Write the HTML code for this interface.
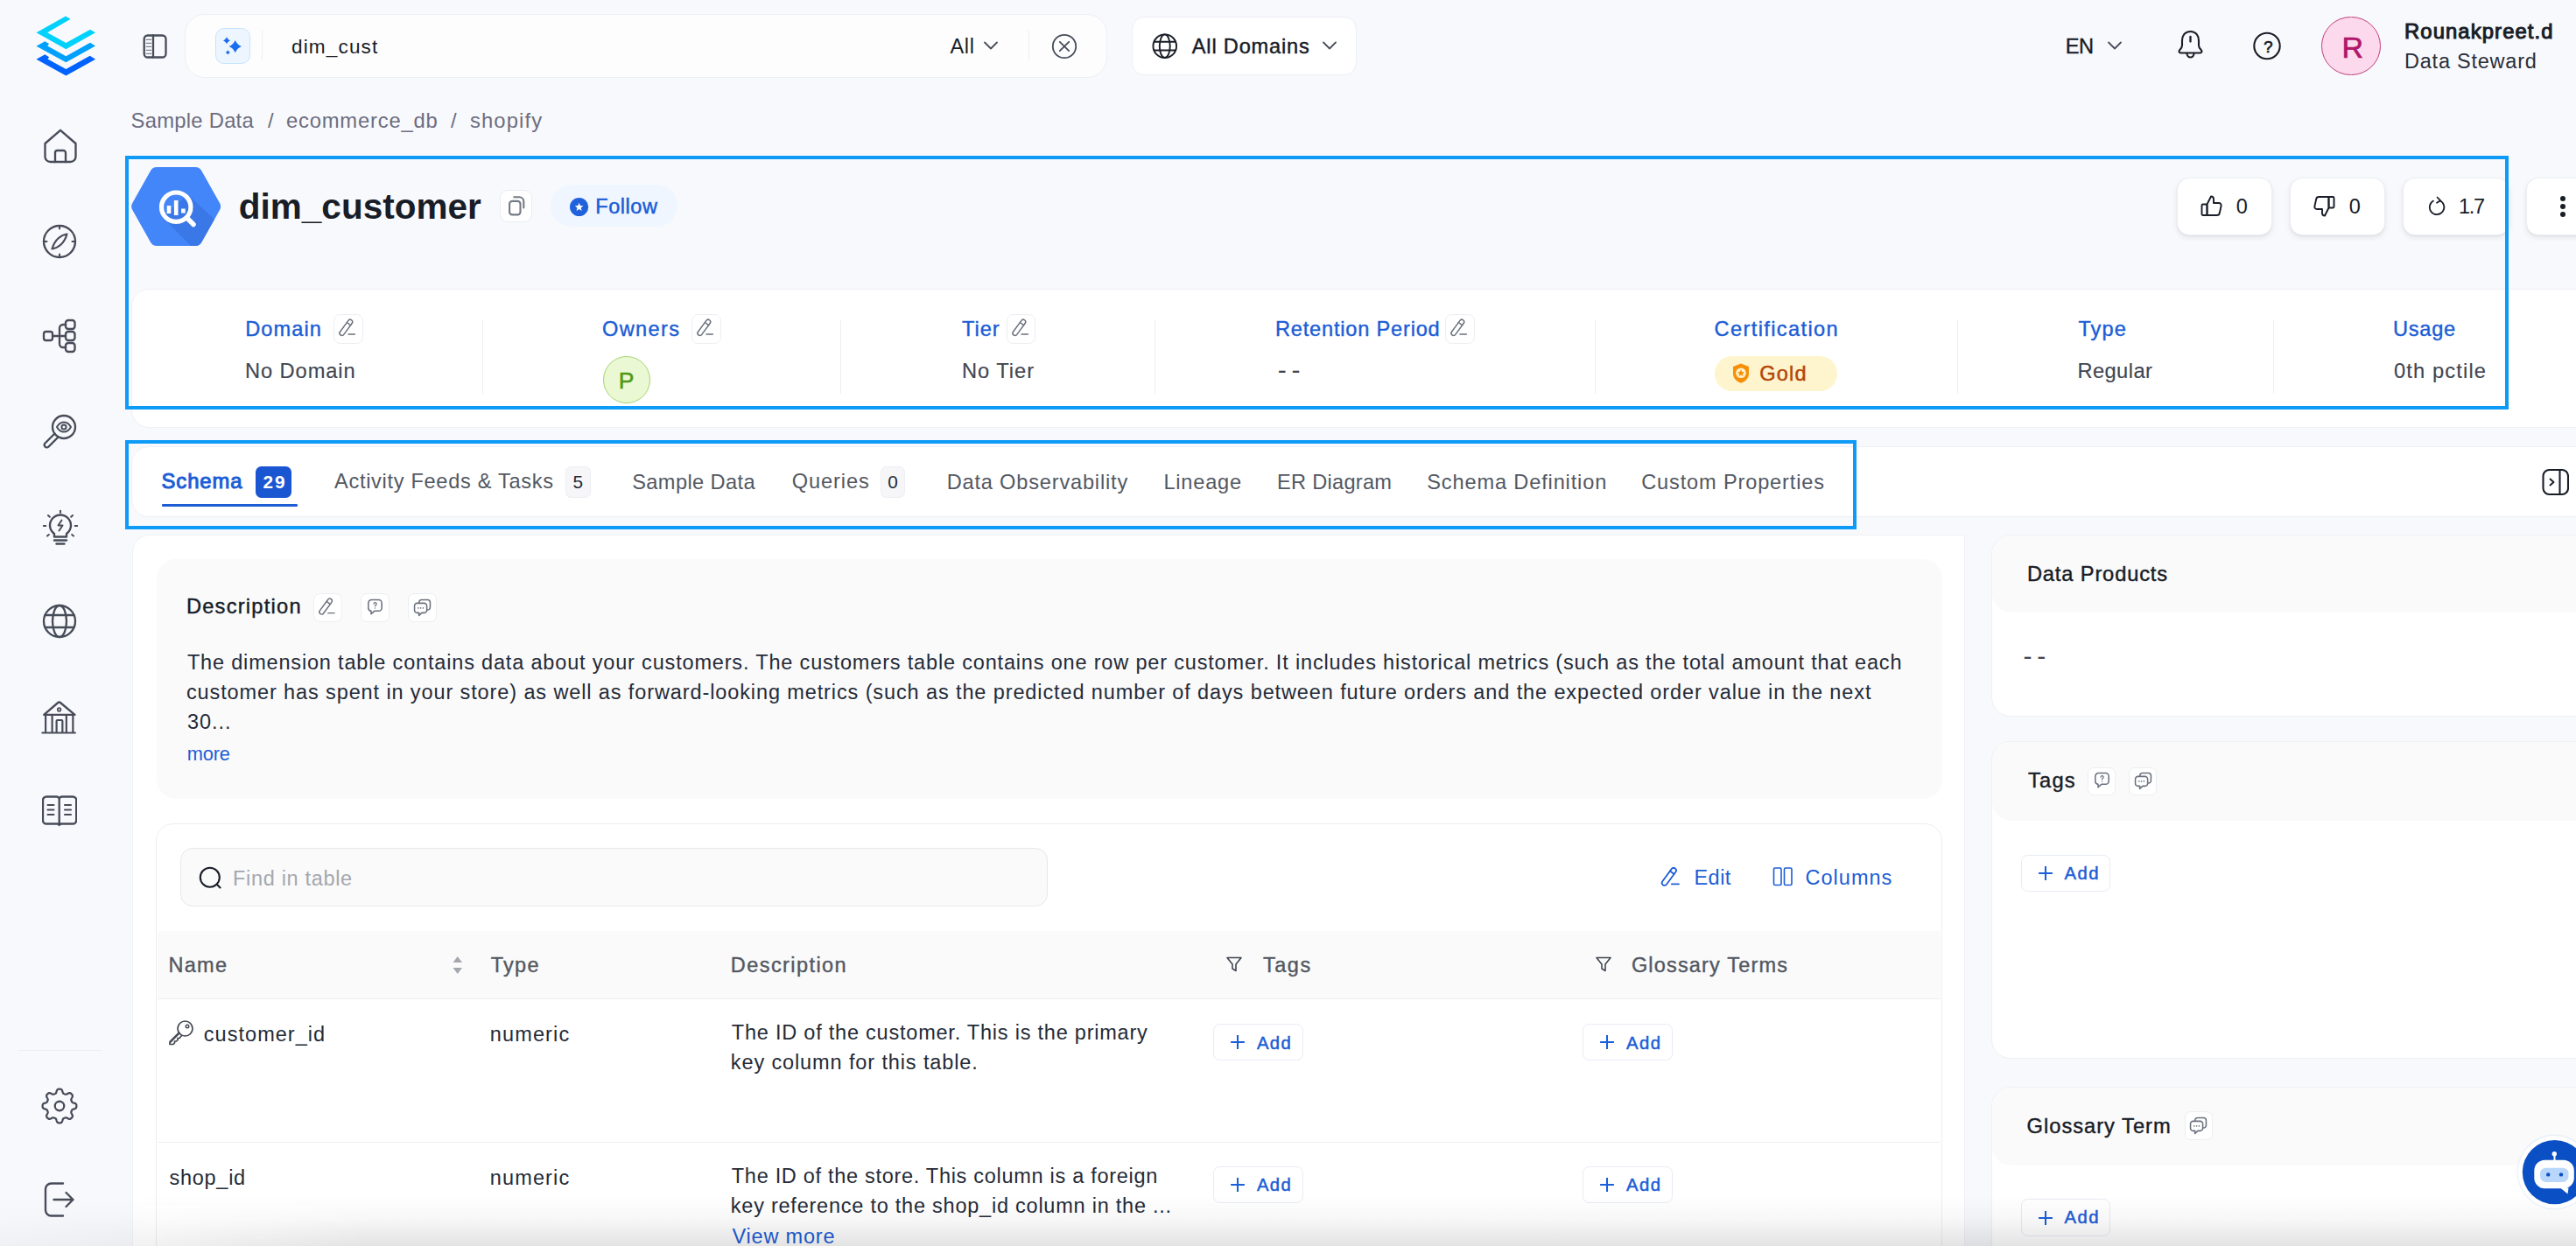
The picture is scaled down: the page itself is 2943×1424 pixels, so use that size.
<!DOCTYPE html>
<html lang="en"><head><meta charset="utf-8"><title>dim_customer - OpenMetadata</title>
<style>
html,body{margin:0;padding:0;background:#f8f9fc;width:2943px;height:1424px;overflow:hidden;}
#page{width:2943px;height:1424px;overflow:hidden;position:relative;background:#f8f9fc;font-family:"Liberation Sans", sans-serif;}
.b{position:absolute;box-sizing:border-box;display:block;}
.t{position:absolute;white-space:pre;line-height:1;font-family:"Liberation Sans", sans-serif;}
</style></head>
<body>
<div id="page">
<nav aria-label="Sidebar">
<svg class="b" style="left:40.00px;top:17.00px;" width="71.00" height="71.00" viewBox="40 17 71 71" fill="none">
<path d="M41.5 37.3 L75 18.6 L80.6 21.7 L54.1 37.3 L75.4 49 L103 33.7 L109 37.3 L75.4 56.2 Z" fill="#00d2fc"/>
<path d="M41.5 52.7 L51.3 47.2 L56 50 L54.3 52.4 L75.4 64.2 L103 48.7 L109 52.5 L75.4 71.3 Z" fill="#00a1fd"/>
<path d="M41.5 67.8 L51.3 62.2 L56.1 65.2 L54.5 67.5 L75.4 79.1 L102.7 63.8 L109.1 67.8 L75.4 86.5 Z" fill="#0062ff"/>
</svg>
<svg class="b" style="left:49.00px;top:147.00px;" width="40.00" height="40.00" viewBox="0 0 40 40" fill="none"><g stroke="#474c59" stroke-width="2.35" stroke-linecap="round" stroke-linejoin="round"><path d="M2.5 17 L20 1.8 L37.5 17 V32 a6 6 0 0 1 -6 6 H8.5 a6 6 0 0 1 -6 -6 Z"/><path d="M14 38 V27.5 a2.5 2.5 0 0 1 2.5 -2.5 h7 a2.5 2.5 0 0 1 2.5 2.5 V38"/></g></svg>
<svg class="b" style="left:48.30px;top:256.40px;" width="40.00" height="40.00" viewBox="0 0 40 40" fill="none"><g stroke="#474c59" stroke-width="2.35" stroke-linecap="round" stroke-linejoin="round"><circle cx="20" cy="20" r="18"/><path d="M20 2 v3.5 M20 34.5 v3.5 M2 20 h3.5 M34.5 20 h3.5" stroke-width="2"/><path d="M28.5 11.5 C22 12.5 14.5 17.5 11.5 28.5 C18 27.5 25.5 22.5 28.5 11.5 Z" stroke-width="2.2"/></g></svg>
<svg class="b" style="left:48.00px;top:364.30px;" width="40.00" height="40.00" viewBox="0 0 40 40" fill="none"><g stroke="#474c59" stroke-width="2.35" stroke-linecap="round" stroke-linejoin="round"><rect x="2" y="15" width="10" height="10" rx="2.5"/><rect x="27" y="2" width="10.5" height="10" rx="3"/><rect x="27" y="15" width="10.5" height="10" rx="3"/><rect x="27" y="28" width="10.5" height="10" rx="3"/><path d="M12 20 H27 M27 7 H24 a4 4 0 0 0 -4 4 V29 a4 4 0 0 0 4 4 H27"/></g></svg>
<svg class="b" style="left:48.00px;top:473.00px;" width="40.00" height="40.00" viewBox="0 0 40 40" fill="none"><g stroke="#474c59" stroke-width="2.35" stroke-linecap="round" stroke-linejoin="round"><circle cx="25" cy="15" r="13"/><path d="M17 15 c2.5 -4.5 5.5 -5.5 8 -5.5 s5.5 1 8 5.5 c-2.5 4.5 -5.5 5.5 -8 5.5 s-5.500 -1 -8 -5.5 Z" stroke-width="2"/><circle cx="25" cy="15" r="2.6" stroke-width="2"/><path d="M14.500 22.500 L3.500 33.500 a2.800 2.800 0 0 0 4 4 L18.500 26.500" stroke-width="2.4"/></g></svg>
<svg class="b" style="left:48.70px;top:582.50px;" width="40.00" height="40.00" viewBox="0 0 40 40" fill="none"><g stroke="#474c59" stroke-width="2.35" stroke-linecap="round" stroke-linejoin="round"><path d="M13 27 c-3 -2.300 -5 -5.500 -5 -9.500 a12 12 0 0 1 24 0 c0 4 -2 7.200 -5 9.500 v3.500 H13 Z" stroke-width="2.400"/><path d="M13 34.500 h14 M15.500 38.500 h9" stroke-width="2.400"/><path d="M21.500 11.500 l-4 6 h5 l-4 6" stroke-width="2"/><path d="M20 0.500 v2.500 M6 6 l1.800 1.800 M34 6 l-1.800 1.800 M0.800 18 h2.500 M36.700 18 h2.500 M5 29.500 l1.800 -1.500 M35 29.500 l-1.800 -1.500" stroke-width="2"/></g></svg>
<svg class="b" style="left:48.30px;top:690.00px;" width="40.00" height="40.00" viewBox="0 0 40 40" fill="none"><g stroke="#474c59" stroke-width="2.35" stroke-linecap="round" stroke-linejoin="round"><circle cx="20" cy="20" r="18"/><ellipse cx="20" cy="20" rx="8" ry="18"/><path d="M3.500 13 H36.500 M3.500 27 H36.500"/></g></svg>
<svg class="b" style="left:47.40px;top:799.50px;" width="40.00" height="40.00" viewBox="0 0 40 40" fill="none"><g stroke="#474c59" stroke-width="2.35" stroke-linecap="round" stroke-linejoin="round"><path d="M3.200 16.800 L19.300 3 a2 2 0 0 1 2.600 0 L38.500 16.800 Z"/><circle cx="20.600" cy="11" r="1.800" stroke-width="1.800"/><path d="M5.100 17.500 V36.500 M12.600 17.500 V36.500 M28.850 17.500 V36.500 M36.350 17.500 V36.500" stroke-width="2.200"/><path d="M17.600 36.500 V24 a1 1 0 0 1 1 -1 h4.750 a1 1 0 0 1 1 1 V36.500" stroke-width="2.200"/><path d="M1.350 37.500 H38.850" stroke-width="2.200"/></g></svg>
<svg class="b" style="left:48.30px;top:907.00px;" width="40.00" height="40.00" viewBox="0 0 40 40" fill="none"><g stroke="#474c59" stroke-width="2.35" stroke-linecap="round" stroke-linejoin="round"><path d="M19.700 6.500 V34.500 M19.700 6.500 a3 3 0 0 0 -3 -3 H5 a4 4 0 0 0 -4 4 V30.500 a4 4 0 0 0 4 4 H19.700 M19.700 6.500 a3 3 0 0 1 3 -3 H35.200 a4 4 0 0 1 4 4 V30.500 a4 4 0 0 1 -4 4 H19.700"/><circle cx="19.700" cy="35.300" r="1.400" fill="#474c59" stroke-width="1"/><path d="M6.500 13 H13.500 M6.500 18.500 H13.500 M6.500 24 H13.500 M26 13 H33 M26 18.500 H33 M26 24 H33" stroke-width="2.100"/></g></svg>
<div class="b" style="left:21.00px;top:1199.80px;width:94.50px;height:1.20px;background:#eceef3;"></div>
<svg class="b" style="left:46.80px;top:1243.00px;" width="42.00" height="42.00" viewBox="0 0 40 40" fill="none"><g stroke="#474c59" stroke-width="2.35" stroke-linecap="round" stroke-linejoin="round"><path d="M20.00 1.55 L20.72 1.58 L21.44 1.71 L22.13 2.01 L22.74 2.73 L23.18 4.01 L23.53 5.30 L23.93 6.06 L24.40 6.45 L24.90 6.71 L25.41 6.93 L25.93 7.13 L26.47 7.30 L27.08 7.36 L27.90 7.11 L29.06 6.45 L30.28 5.85 L31.21 5.78 L31.92 6.05 L32.51 6.47 L33.05 6.95 L33.53 7.49 L33.95 8.08 L34.22 8.79 L34.15 9.72 L33.55 10.94 L32.89 12.10 L32.64 12.92 L32.70 13.53 L32.87 14.07 L33.07 14.59 L33.29 15.10 L33.55 15.60 L33.94 16.07 L34.70 16.47 L35.99 16.82 L37.27 17.26 L37.99 17.87 L38.29 18.56 L38.42 19.28 L38.45 20.00 L38.42 20.72 L38.29 21.44 L37.99 22.13 L37.27 22.74 L35.99 23.18 L34.70 23.53 L33.94 23.93 L33.55 24.40 L33.29 24.90 L33.07 25.41 L32.87 25.93 L32.70 26.47 L32.64 27.08 L32.89 27.90 L33.55 29.06 L34.15 30.28 L34.22 31.21 L33.95 31.92 L33.53 32.51 L33.05 33.05 L32.51 33.53 L31.92 33.95 L31.21 34.22 L30.28 34.15 L29.06 33.55 L27.90 32.89 L27.08 32.64 L26.47 32.70 L25.93 32.87 L25.41 33.07 L24.90 33.29 L24.40 33.55 L23.93 33.94 L23.53 34.70 L23.18 35.99 L22.74 37.27 L22.13 37.99 L21.44 38.29 L20.72 38.42 L20.00 38.45 L19.28 38.42 L18.56 38.29 L17.87 37.99 L17.26 37.27 L16.82 35.99 L16.47 34.70 L16.07 33.94 L15.60 33.55 L15.10 33.29 L14.59 33.07 L14.07 32.87 L13.53 32.70 L12.92 32.64 L12.10 32.89 L10.94 33.55 L9.72 34.15 L8.79 34.22 L8.08 33.95 L7.49 33.53 L6.95 33.05 L6.47 32.51 L6.05 31.92 L5.78 31.21 L5.85 30.28 L6.45 29.06 L7.11 27.90 L7.36 27.08 L7.30 26.47 L7.13 25.93 L6.93 25.41 L6.71 24.90 L6.45 24.40 L6.06 23.93 L5.30 23.53 L4.01 23.18 L2.73 22.74 L2.01 22.13 L1.71 21.44 L1.58 20.72 L1.55 20.00 L1.58 19.28 L1.71 18.56 L2.01 17.87 L2.73 17.26 L4.01 16.82 L5.30 16.47 L6.06 16.07 L6.45 15.60 L6.71 15.10 L6.93 14.59 L7.13 14.07 L7.30 13.53 L7.36 12.92 L7.11 12.10 L6.45 10.94 L5.85 9.72 L5.78 8.79 L6.05 8.08 L6.47 7.49 L6.95 6.95 L7.49 6.47 L8.08 6.05 L8.79 5.78 L9.72 5.85 L10.94 6.45 L12.10 7.11 L12.92 7.36 L13.53 7.30 L14.07 7.13 L14.59 6.93 L15.10 6.71 L15.60 6.45 L16.07 6.06 L16.47 5.30 L16.82 4.01 L17.26 2.73 L17.87 2.01 L18.56 1.71 L19.28 1.58 Z" stroke-width="2.150"/><circle cx="20" cy="20" r="5" stroke-width="2.150"/></g></svg>
<svg class="b" style="left:48.00px;top:1351.00px;" width="40.00" height="40.00" viewBox="0 0 40 40" fill="none"><g stroke="#474c59" stroke-width="2.35" stroke-linecap="round" stroke-linejoin="round"><path d="M24 1.500 H10.500 a6.500 6.500 0 0 0 -6.500 6.500 V32 a6.500 6.500 0 0 0 6.500 6.500 H24"/><path d="M13.500 20 H35.500 M27.500 12 L35.500 20 L27.500 28"/></g></svg>
</nav>
<header>
<svg class="b" style="left:162.00px;top:37.50px;" width="30.00" height="30.00" viewBox="162 37.5 30 30" fill="none"><g stroke="#474c59" stroke-width="2.300" stroke-linecap="round" stroke-linejoin="round"><rect x="164.700" y="40" width="24.800" height="25" rx="4"/><path d="M175 40 V65"/><path d="M167.200 44.750 H172.800 M167.200 48.750 H172.800 M167.200 52.750 H172.800 M167.200 56.750 H172.800 M167.200 60.750 H172.800" stroke="#7d828d" stroke-width="1.250"/></g></svg>
<div class="b" style="left:211.00px;top:15.60px;width:1053.60px;height:73.40px;background:#fdfdfe;border:1.5px solid #edeff5;border-radius:23px;"></div>
<div class="b" style="left:246.00px;top:32.30px;width:39.60px;height:40.80px;background:#edf6ff;border:1.3px solid #c4e3fc;border-radius:10px;"></div>
<svg class="b" style="left:250.00px;top:38.00px;" width="32.00" height="30.00" viewBox="250 38 32 30" fill="none"><path d="M268.75 45.9 C270.0964 49.1832 272.6668 51.7536 275.95 53.1 C272.6668 54.446400000000004 270.0964 57.0168 268.75 60.300000000000004 C267.4036 57.0168 264.8332 54.446400000000004 261.55 53.1 C264.8332 51.7536 267.4036 49.1832 268.75 45.9 Z" fill="#1a6cf0"/><path d="M259 42.15 C259.7667 44.0196 261.2304 45.4833 263.1 46.25 C261.2304 47.0167 259.7667 48.4804 259 50.35 C258.2333 48.4804 256.7696 47.0167 254.9 46.25 C256.7696 45.4833 258.2333 44.0196 259 42.15 Z" fill="#1a6cf0"/><path d="M260.3 57.3 C260.80490000000003 58.5312 261.7688 59.4951 263.0 60 C261.7688 60.5049 260.80490000000003 61.4688 260.3 62.7 C259.7951 61.4688 258.8312 60.5049 257.6 60 C258.8312 59.4951 259.7951 58.5312 260.3 57.3 Z" fill="#1a6cf0"/></svg>
<div class="b" style="left:299.20px;top:35.00px;width:1.20px;height:34.00px;background:#eceef2;"></div>
<span class="t" id="t0" style="left:333.00px;top:42.72px;font-size:22.60px;color:#181d27;letter-spacing:1.124px;">dim_cust</span>
<span class="t" id="t1" style="left:1085.40px;top:42.31px;font-size:23.50px;color:#181d27;letter-spacing:0.752px;">All</span>
<svg class="b" style="left:1123.00px;top:46.00px;" width="18.00" height="12.00" viewBox="0 0 18 12" fill="none"><path d="M2 2.500 L9 9.500 L16 2.500" stroke="#474c59" stroke-width="1.800" stroke-linecap="round" stroke-linejoin="round"/></svg>
<div class="b" style="left:1175.00px;top:35.00px;width:1.20px;height:34.00px;background:#eceef2;"></div>
<svg class="b" style="left:1201.00px;top:38.00px;" width="30.00" height="30.00" viewBox="0 0 30 30" fill="none"><g stroke="#474c59" stroke-width="1.800" stroke-linecap="round"><circle cx="15" cy="15" r="13.200"/><path d="M9.800 9.800 L20.200 20.200 M20.200 9.800 L9.800 20.200"/></g></svg>
<div class="b" style="left:1293.30px;top:19.20px;width:256.30px;height:66.90px;background:#ffffff;border:1.2px solid #eceff6;border-radius:14px;"></div>
<svg class="b" style="left:1315.00px;top:37.00px;" width="32.00" height="32.00" viewBox="1315 37 32 32" fill="none"><g stroke="#181d27" stroke-width="1.900"><circle cx="1330.750" cy="52.700" r="13.300"/><ellipse cx="1330.750" cy="52.700" rx="6" ry="13.300"/><path d="M1318.300 47.700 H1343.200 M1318.300 57.500 H1343.200"/></g></svg>
<span class="t" id="t2" style="left:1361.80px;top:42.31px;font-size:23.60px;color:#181d27;letter-spacing:0.813px;-webkit-text-stroke:0.45px #181d27;">All Domains</span>
<svg class="b" style="left:1510.00px;top:46.00px;" width="18.00" height="12.00" viewBox="0 0 18 12" fill="none"><path d="M2 2.500 L9 9.500 L16 2.500" stroke="#474c59" stroke-width="1.800" stroke-linecap="round" stroke-linejoin="round"/></svg>
<span class="t" id="t3" style="left:2359.80px;top:42.31px;font-size:23.60px;color:#181d27;letter-spacing:-0.537px;-webkit-text-stroke:0.4px #181d27;">EN</span>
<svg class="b" style="left:2407.00px;top:46.00px;" width="18.00" height="12.00" viewBox="0 0 18 12" fill="none"><path d="M2 2.500 L9 9.500 L16 2.500" stroke="#474c59" stroke-width="1.800" stroke-linecap="round" stroke-linejoin="round"/></svg>
<svg class="b" style="left:2487.00px;top:34.00px;" width="31.00" height="34.00" viewBox="0 0 31 34" fill="none"><g stroke="#181d27" stroke-width="2.100" stroke-linecap="round" stroke-linejoin="round"><path d="M15.500 2 C9 2 6 7 6 12.500 V18 C6 20.500 4.500 22 3 23.500 C2 24.500 2.500 26.500 4.500 26.500 H26.500 C28.500 26.500 29 24.500 28 23.500 C26.500 22 25 20.500 25 18 V12.500 C25 7 22 2 15.500 2 Z"/><path d="M11.500 27 a4 4.500 0 0 0 8 0"/><path d="M15.500 8 V13.500" stroke-width="2.300"/></g></svg>
<svg class="b" style="left:2573.00px;top:36.00px;" width="34.00" height="33.00" viewBox="0 0 34 33" fill="none"><circle cx="17" cy="16.500" r="14.700" stroke="#181d27" stroke-width="2.100"/></svg>
<span class="t" id="t4" style="left:2586.30px;top:44.60px;font-size:18.50px;color:#181d27;-webkit-text-stroke:0.7px #181d27;">?</span>
<div class="b" style="left:2651.80px;top:18.50px;width:67.80px;height:67.80px;background:#fcd9ec;border:1.2px solid #c2407e;border-radius:50%;"></div>
<span class="t" id="t5" style="left:2675.40px;top:36.62px;font-size:34.00px;color:#b0176a;-webkit-text-stroke:0.7px #b0176a;">R</span>
<span class="t" id="t6" style="left:2747.00px;top:24.40px;font-size:23.80px;color:#181d27;letter-spacing:1.119px;-webkit-text-stroke:1.05px #181d27;">Rounakpreet.d</span>
<span class="t" id="t7" style="left:2747.00px;top:59.31px;font-size:23.50px;color:#2a2f3a;letter-spacing:0.772px;">Data Steward</span>
</header>
<nav aria-label="Breadcrumb">
<span class="t" id="t8" style="left:149.60px;top:125.90px;font-size:23.80px;color:#6c6d80;letter-spacing:0.257px;">Sample Data</span>
<span class="t" id="t9" style="left:306.00px;top:125.90px;font-size:23.80px;color:#6c6d80;">/</span>
<span class="t" id="t10" style="left:327.00px;top:125.90px;font-size:23.80px;color:#6c6d80;letter-spacing:0.793px;">ecommerce_db</span>
<span class="t" id="t11" style="left:515.00px;top:125.90px;font-size:23.80px;color:#6c6d80;">/</span>
<span class="t" id="t12" style="left:537.00px;top:125.90px;font-size:23.80px;color:#6c6d80;letter-spacing:1.117px;">shopify</span>
</nav>
<section aria-label="Entity header">
<svg class="b" style="left:149.50px;top:190.50px;" width="102.30" height="90.00" viewBox="0 0 102.3 90" fill="none">
<defs><clipPath id="hx"><path d="M29 0 H73.300 a8 8 0 0 1 6.900 4 L101 41 a8 8 0 0 1 0 8 L80.200 86 a8 8 0 0 1 -6.900 4 H29 a8 8 0 0 1 -6.900 -4 L1.300 49 a8 8 0 0 1 0 -8 L22.100 4 a8 8 0 0 1 6.900 -4 Z"/></clipPath></defs>
<g clip-path="url(#hx)"><rect width="102.300" height="90" fill="#4386fa"/>
<path d="M36 58 L64 31 L102 66 V90 H68 Z" fill="#3b78e7"/></g>
<circle cx="51.200" cy="45.700" r="16.700" stroke="#fff" stroke-width="5.200"/>
<path d="M63.500 58 L71 65.500" stroke="#fff" stroke-width="5.500" stroke-linecap="round"/>
<path d="M43 44 V53 M51.200 38 V55 M59.400 47.500 V52.500" stroke="#fff" stroke-width="4.600"/>
</svg>
<span class="t" id="t13" style="left:272.75px;top:215.81px;font-size:40.50px;color:#181d27;font-weight:700;letter-spacing:0.016px;">dim_customer</span>
<div class="b" style="left:571.25px;top:216.90px;width:36.25px;height:36.90px;background:#ffffff;border:1px solid #eaecf2;border-radius:9px;"></div>
<svg class="b" style="left:578.00px;top:222.00px;" width="24.00" height="27.00" viewBox="578 222 24 27" fill="none"><rect x="582.100" y="229.900" width="12.400" height="15.500" rx="3.200" stroke="#747a86" stroke-width="2.100"/><path d="M587.200 225.300 H593.300 a5 5 0 0 1 5 5 V237.500" stroke="#747a86" stroke-width="2.100" stroke-linecap="round"/></svg>
<div class="b" style="left:629.40px;top:211.25px;width:144.40px;height:48.10px;background:#eff6ff;border-radius:24.1px;"></div>
<svg class="b" style="left:651.25px;top:225.60px;" width="21.25" height="21.25" viewBox="0 0 21.25 21.25" fill="none"><circle cx="10.600" cy="10.600" r="10.600" fill="#1f62dc"/><path d="M10.600 5.800 L11.900 9.100 L15.400 9.300 L12.700 11.500 L13.600 14.900 L10.600 13 L7.600 14.900 L8.500 11.500 L5.800 9.300 L9.300 9.100 Z" fill="#fff"/></svg>
<span class="t" id="t14" style="left:680.25px;top:225.40px;font-size:23.50px;color:#1c5dd6;letter-spacing:0.563px;-webkit-text-stroke:0.5px #1c5dd6;">Follow</span>
<div class="b" style="left:2486.90px;top:202.50px;width:109.40px;height:66.90px;background:#ffffff;border:1px solid #eceef3;border-radius:14px;box-shadow:0 1px 2px rgba(16,24,40,0.05),0 3px 6px rgba(16,24,40,0.08);"></div>
<div class="b" style="left:2615.60px;top:202.50px;width:109.40px;height:66.90px;background:#ffffff;border:1px solid #eceef3;border-radius:14px;box-shadow:0 1px 2px rgba(16,24,40,0.05),0 3px 6px rgba(16,24,40,0.08);"></div>
<div class="b" style="left:2744.75px;top:202.50px;width:122.50px;height:66.90px;background:#ffffff;border:1px solid #eceef3;border-radius:14px;box-shadow:0 1px 2px rgba(16,24,40,0.05),0 3px 6px rgba(16,24,40,0.08);"></div>
<div class="b" style="left:2886.00px;top:202.50px;width:80.00px;height:66.90px;background:#ffffff;border:1px solid #eceef3;border-radius:14px;box-shadow:0 1px 2px rgba(16,24,40,0.05),0 3px 6px rgba(16,24,40,0.08);"></div>
<svg class="b" style="left:2513.00px;top:222.00px;" width="27.00" height="27.00" viewBox="0 0 27 27" fill="none"><g stroke="#181d27" stroke-width="1.900" stroke-linejoin="round" stroke-linecap="round"><path d="M8.500 11.500 L13 2.500 C14.800 2.500 16 3.700 16 5.500 V10 H22 C23.800 10 25 11.600 24.600 13.300 L22.800 21.500 C22.500 23 21.300 24 19.800 24 H8.500 Z"/><rect x="2.500" y="11.500" width="6" height="12.500" rx="1.200"/></g></svg>
<span class="t" id="t15" style="left:2554.70px;top:225.40px;font-size:23.50px;color:#181d27;">0</span>
<svg class="b" style="left:2642.00px;top:222.00px;" width="27.00" height="27.00" viewBox="0 0 27 27" fill="none"><g transform="rotate(180 13.5 13.5)" stroke="#181d27" stroke-width="1.900" stroke-linejoin="round" stroke-linecap="round"><path d="M8.500 11.500 L13 2.500 C14.800 2.500 16 3.700 16 5.500 V10 H22 C23.800 10 25 11.600 24.600 13.300 L22.800 21.500 C22.500 23 21.300 24 19.800 24 H8.500 Z"/><rect x="2.500" y="11.500" width="6" height="12.500" rx="1.200"/></g></svg>
<span class="t" id="t16" style="left:2683.70px;top:225.40px;font-size:23.50px;color:#181d27;">0</span>
<svg class="b" style="left:2773.00px;top:224.00px;" width="22.00" height="23.00" viewBox="0 0 22 23" fill="none"><g stroke="#181d27" stroke-width="1.700" stroke-linecap="round" stroke-linejoin="round"><path d="M14.500 5.300 A8.300 8.300 0 1 1 7 5.600"/><path d="M11.500 1.500 L15 5.200 L11 7.800" /></g></svg>
<span class="t" id="t17" style="left:2809.00px;top:225.40px;font-size:23.50px;color:#181d27;letter-spacing:-1.299px;">1.7</span>
<div class="b" style="left:2924.60px;top:223.80px;width:6.40px;height:6.40px;background:#181d27;border-radius:50%;"></div>
<div class="b" style="left:2924.60px;top:232.80px;width:6.40px;height:6.40px;background:#181d27;border-radius:50%;"></div>
<div class="b" style="left:2924.60px;top:241.80px;width:6.40px;height:6.40px;background:#181d27;border-radius:50%;"></div>
<div class="b" style="left:150.00px;top:330.20px;width:2900.00px;height:158.40px;background:#ffffff;border:1px solid #eff0f4;border-radius:20px;"></div>
<span class="t" id="t18" style="left:280.25px;top:365.00px;font-size:23.60px;color:#1c5dd6;letter-spacing:1.064px;-webkit-text-stroke:0.4px #1c5dd6;">Domain</span>
<div class="b" style="left:381.20px;top:359.00px;width:33.50px;height:33.50px;background:#ffffff;border:1px solid #eceef2;border-radius:7.5px;"></div>
<svg class="b" style="left:381.20px;top:359.00px;" width="33.50" height="33.50" viewBox="0 0 33.1 33.1" fill="none"><g stroke="#6a707d" stroke-width="1.45" stroke-linecap="round" stroke-linejoin="round"><path d="M7.400 19.960 L16.700 7.260 A2.600 2.600 0 0 1 20.900 10.340 L11.600 23.040 A2.600 2.600 0 0 1 7.400 19.960 Z"/><path d="M15.160 9.360 L19.360 12.440"/><path d="M16.800 22.700 H24.100"/></g></svg>
<span class="t" id="t19" style="left:280.00px;top:413.26px;font-size:23.70px;color:#414651;letter-spacing:0.899px;-webkit-text-stroke:0.15px #414651;">No Domain</span>
<div class="b" style="left:550.70px;top:365.70px;width:1.20px;height:84.60px;background:#eceef2;"></div>
<span class="t" id="t20" style="left:688.00px;top:365.00px;font-size:23.60px;color:#1c5dd6;letter-spacing:1.342px;-webkit-text-stroke:0.4px #1c5dd6;">Owners</span>
<div class="b" style="left:790.00px;top:359.00px;width:33.50px;height:33.50px;background:#ffffff;border:1px solid #eceef2;border-radius:7.5px;"></div>
<svg class="b" style="left:790.00px;top:359.00px;" width="33.50" height="33.50" viewBox="0 0 33.1 33.1" fill="none"><g stroke="#6a707d" stroke-width="1.45" stroke-linecap="round" stroke-linejoin="round"><path d="M7.400 19.960 L16.700 7.260 A2.600 2.600 0 0 1 20.900 10.340 L11.600 23.040 A2.600 2.600 0 0 1 7.400 19.960 Z"/><path d="M15.160 9.360 L19.360 12.440"/><path d="M16.800 22.700 H24.100"/></g></svg>
<div class="b" style="left:688.80px;top:406.70px;width:53.90px;height:53.90px;background:#eaf8d4;border:1.2px solid #a5d56f;border-radius:50%;"></div>
<span class="t" id="t21" style="left:706.80px;top:422.41px;font-size:26.50px;color:#4f9a12;-webkit-text-stroke:0.5px #4f9a12;">P</span>
<div class="b" style="left:960.10px;top:365.70px;width:1.20px;height:84.60px;background:#eceef2;"></div>
<span class="t" id="t22" style="left:1099.00px;top:365.00px;font-size:23.60px;color:#1c5dd6;letter-spacing:0.933px;-webkit-text-stroke:0.4px #1c5dd6;">Tier</span>
<div class="b" style="left:1149.80px;top:359.00px;width:33.50px;height:33.50px;background:#ffffff;border:1px solid #eceef2;border-radius:7.5px;"></div>
<svg class="b" style="left:1149.80px;top:359.00px;" width="33.50" height="33.50" viewBox="0 0 33.1 33.1" fill="none"><g stroke="#6a707d" stroke-width="1.45" stroke-linecap="round" stroke-linejoin="round"><path d="M7.400 19.960 L16.700 7.260 A2.600 2.600 0 0 1 20.900 10.340 L11.600 23.040 A2.600 2.600 0 0 1 7.400 19.960 Z"/><path d="M15.160 9.360 L19.360 12.440"/><path d="M16.800 22.700 H24.100"/></g></svg>
<span class="t" id="t23" style="left:1099.00px;top:413.26px;font-size:23.70px;color:#414651;letter-spacing:0.952px;-webkit-text-stroke:0.15px #414651;">No Tier</span>
<div class="b" style="left:1318.60px;top:365.70px;width:1.20px;height:84.60px;background:#eceef2;"></div>
<span class="t" id="t24" style="left:1457.00px;top:365.00px;font-size:23.60px;color:#1c5dd6;letter-spacing:0.798px;-webkit-text-stroke:0.4px #1c5dd6;">Retention Period</span>
<div class="b" style="left:1651.40px;top:359.00px;width:33.50px;height:33.50px;background:#ffffff;border:1px solid #eceef2;border-radius:7.5px;"></div>
<svg class="b" style="left:1651.40px;top:359.00px;" width="33.50" height="33.50" viewBox="0 0 33.1 33.1" fill="none"><g stroke="#6a707d" stroke-width="1.45" stroke-linecap="round" stroke-linejoin="round"><path d="M7.400 19.960 L16.700 7.260 A2.600 2.600 0 0 1 20.900 10.340 L11.600 23.040 A2.600 2.600 0 0 1 7.400 19.960 Z"/><path d="M15.160 9.360 L19.360 12.440"/><path d="M16.800 22.700 H24.100"/></g></svg>
<span class="t" id="t25" style="left:1459.70px;top:408.20px;font-size:30.00px;color:#414651;letter-spacing:-1.313px;">- -</span>
<div class="b" style="left:1821.70px;top:365.70px;width:1.20px;height:84.60px;background:#eceef2;"></div>
<span class="t" id="t26" style="left:1958.60px;top:365.00px;font-size:23.60px;color:#1c5dd6;letter-spacing:1.379px;-webkit-text-stroke:0.4px #1c5dd6;">Certification</span>
<div class="b" style="left:1958.75px;top:406.90px;width:140.25px;height:40.00px;background:#fef4cd;border-radius:20px;"></div>
<svg class="b" style="left:1977.00px;top:414.00px;" width="24.00" height="25.00" viewBox="0 0 24 25" fill="none"><path d="M12 1.500 L21 5 V13 C21 18.500 17 22 12 23.800 C7 22 3 18.500 3 13 V5 Z" fill="#f79009"/><circle cx="12" cy="12.300" r="5.800" fill="#fff4d1"/><path d="M12 8.300 L13.200 11 L16 11.300 L13.900 13.200 L14.500 16 L12 14.500 L9.500 16 L10.100 13.200 L8 11.300 L10.800 11 Z" fill="#f79009"/></svg>
<span class="t" id="t27" style="left:2010.25px;top:416.25px;font-size:23.60px;color:#b54708;letter-spacing:1.145px;-webkit-text-stroke:0.5px #b54708;">Gold</span>
<div class="b" style="left:2236.00px;top:365.70px;width:1.20px;height:84.60px;background:#eceef2;"></div>
<span class="t" id="t28" style="left:2374.40px;top:365.00px;font-size:23.60px;color:#1c5dd6;letter-spacing:1.091px;-webkit-text-stroke:0.4px #1c5dd6;">Type</span>
<span class="t" id="t29" style="left:2373.40px;top:413.26px;font-size:23.70px;color:#414651;letter-spacing:0.423px;-webkit-text-stroke:0.15px #414651;">Regular</span>
<div class="b" style="left:2597.00px;top:365.70px;width:1.20px;height:84.60px;background:#eceef2;"></div>
<span class="t" id="t30" style="left:2734.00px;top:365.00px;font-size:23.60px;color:#1c5dd6;letter-spacing:0.730px;-webkit-text-stroke:0.4px #1c5dd6;">Usage</span>
<span class="t" id="t31" style="left:2735.00px;top:413.26px;font-size:23.70px;color:#414651;letter-spacing:1.130px;-webkit-text-stroke:0.15px #414651;">0th pctile</span>
</section>
<nav aria-label="Tabs">
<div class="b" style="left:150.00px;top:509.50px;width:2900.00px;height:81.00px;background:#ffffff;border:1px solid #eff0f4;border-radius:20px;"></div>
<span class="t" id="t32" style="left:184.60px;top:538.11px;font-size:23.80px;color:#1c5dd6;letter-spacing:0.907px;-webkit-text-stroke:1.0px #1c5dd6;">Schema</span>
<div class="b" style="left:292.00px;top:533.00px;width:41.00px;height:35.70px;background:#1a56d2;border-radius:6.5px;"></div>
<span class="t" id="t33" style="left:300.50px;top:541.10px;font-size:20.80px;color:#ffffff;font-weight:700;letter-spacing:1.934px;">29</span>
<div class="b" style="left:184.80px;top:575.50px;width:155.70px;height:3.40px;background:#1c5dd6;border-radius:1px;"></div>
<span class="t" id="t34" style="left:382.00px;top:539.11px;font-size:23.60px;color:#535862;letter-spacing:0.685px;">Activity Feeds &amp; Tasks</span>
<div class="b" style="left:646.40px;top:533.00px;width:28.30px;height:35.70px;background:#f6f6f8;border:1px solid #eceef2;border-radius:6.5px;"></div>
<span class="t" id="t35" style="left:654.50px;top:541.10px;font-size:20.80px;color:#252b37;">5</span>
<span class="t" id="t36" style="left:722.20px;top:539.91px;font-size:23.60px;color:#535862;letter-spacing:0.393px;">Sample Data</span>
<span class="t" id="t37" style="left:904.70px;top:539.11px;font-size:23.60px;color:#535862;letter-spacing:0.914px;">Queries</span>
<div class="b" style="left:1005.80px;top:533.00px;width:28.70px;height:35.70px;background:#f6f6f8;border:1px solid #eceef2;border-radius:6.5px;"></div>
<span class="t" id="t38" style="left:1014.30px;top:541.10px;font-size:20.80px;color:#252b37;">0</span>
<span class="t" id="t39" style="left:1081.70px;top:539.91px;font-size:23.60px;color:#535862;letter-spacing:0.808px;">Data Observability</span>
<span class="t" id="t40" style="left:1329.40px;top:539.91px;font-size:23.60px;color:#535862;letter-spacing:0.792px;">Lineage</span>
<span class="t" id="t41" style="left:1459.00px;top:539.91px;font-size:23.60px;color:#535862;letter-spacing:0.274px;">ER Diagram</span>
<span class="t" id="t42" style="left:1630.20px;top:539.91px;font-size:23.60px;color:#535862;letter-spacing:0.853px;">Schema Definition</span>
<span class="t" id="t43" style="left:1875.20px;top:539.91px;font-size:23.60px;color:#535862;letter-spacing:0.839px;">Custom Properties</span>
<svg class="b" style="left:2903.50px;top:535.30px;" width="31.50" height="32.00" viewBox="0 0 31.5 32" fill="none"><g stroke="#181d27" stroke-width="2.100" stroke-linecap="round" stroke-linejoin="round"><rect x="1.500" y="2" width="28.500" height="28" rx="7"/><path d="M20.500 2 V30"/><path d="M9.500 12.500 L13.500 16 L9.500 19.500" stroke-width="1.900"/></g></svg>
</nav>
<main>
<section aria-label="Description">
<div class="b" style="left:150.60px;top:611.40px;width:2094.80px;height:900.00px;background:#ffffff;border:1px solid #f0f1f5;border-radius:20px 0 0 0;"></div>
<div class="b" style="left:178.60px;top:638.60px;width:2040.20px;height:274.00px;background:#fafafb;border-radius:22px;"></div>
<span class="t" id="t44" style="left:212.90px;top:681.91px;font-size:23.70px;color:#181d27;letter-spacing:1.219px;-webkit-text-stroke:0.42px #181d27;">Description</span>
<div class="b" style="left:357.90px;top:678.20px;width:33.00px;height:33.00px;background:#ffffff;border:1px solid #eceef2;border-radius:7.5px;"></div>
<svg class="b" style="left:357.90px;top:678.20px;" width="33.00" height="33.00" viewBox="0 0 33.1 33.1" fill="none"><g stroke="#6a707d" stroke-width="1.45" stroke-linecap="round" stroke-linejoin="round"><path d="M7.400 19.960 L16.700 7.260 A2.600 2.600 0 0 1 20.900 10.340 L11.600 23.040 A2.600 2.600 0 0 1 7.400 19.960 Z"/><path d="M15.160 9.360 L19.360 12.440"/><path d="M16.800 22.700 H24.100"/></g></svg>
<div class="b" style="left:412.30px;top:678.20px;width:33.00px;height:33.00px;background:#ffffff;border:1px solid #eceef2;border-radius:7px;"></div>
<svg class="b" style="left:417.30px;top:683.20px;" width="23.00" height="23.00" viewBox="0 0 18 18" fill="none"><path d="M3 4.800 a2.800 2.800 0 0 1 2.800 -2.800 h6.400 a2.800 2.800 0 0 1 2.800 2.800 v4.400 a2.800 2.800 0 0 1 -2.800 2.800 H8.500 L5.500 14.600 V12 a2.800 2.800 0 0 1 -2.500 -2.800 Z" stroke="#6a707d" stroke-width="1.200" stroke-linejoin="round"/><path d="M7.900 5.600 a1.200 1.200 0 1 1 1.700 1.100 c-0.400 0.200 -0.600 0.500 -0.600 0.900 M9 9.300 v0.100" stroke="#6a707d" stroke-width="1" stroke-linecap="round"/></svg>
<div class="b" style="left:466.20px;top:678.20px;width:33.00px;height:33.00px;background:#ffffff;border:1px solid #eceef2;border-radius:7px;"></div>
<svg class="b" style="left:471.20px;top:683.20px;" width="23.00" height="23.00" viewBox="0 0 18 18" fill="none"><path d="M6 4.500 V4.300 a2.300 2.300 0 0 1 2.300 -2.300 h5.400 a2.300 2.300 0 0 1 2.300 2.300 v4.400 a2.300 2.300 0 0 1 -2.300 2.300 h-0.200" stroke="#6a707d" stroke-width="1.200" stroke-linecap="round"/><path d="M2 7.300 a2.300 2.300 0 0 1 2.300 -2.300 h6.400 a2.300 2.300 0 0 1 2.300 2.300 v4 a2.300 2.300 0 0 1 -2.300 2.300 H8.500 L6 16 V13.600 H4.300 a2.300 2.300 0 0 1 -2.300 -2.300 Z" stroke="#6a707d" stroke-width="1.200" stroke-linejoin="round"/><path d="M5.300 9.300 v0.100 M7.500 9.300 v0.100 M9.700 9.300 v0.100" stroke="#6a707d" stroke-width="1.300" stroke-linecap="round"/></svg>
<span class="t" id="t45" style="left:213.90px;top:745.81px;font-size:23.50px;color:#252b37;letter-spacing:0.826px;">The dimension table contains data about your customers. The customers table contains one row per customer. It includes historical metrics (such as the total amount that each</span>
<span class="t" id="t46" style="left:212.90px;top:779.62px;font-size:23.50px;color:#252b37;letter-spacing:0.889px;">customer has spent in your store) as well as forward-looking metrics (such as the predicted number of days between future orders and the expected order value in the next</span>
<span class="t" id="t47" style="left:213.90px;top:813.62px;font-size:23.50px;color:#252b37;letter-spacing:0.976px;">30...</span>
<span class="t" id="t48" style="left:213.75px;top:850.51px;font-size:21.80px;color:#1c5dd6;letter-spacing:-0.163px;">more</span>
</section>
<section aria-label="Schema table">
<div class="b" style="left:178.40px;top:941.00px;width:2040.60px;height:600.00px;background:#ffffff;border:1px solid #eceef2;border-radius:20px 20px 0 0;"></div>
<div class="b" style="left:206.30px;top:968.50px;width:991.10px;height:67.20px;background:#fafafa;border:1px solid #e6e8ec;border-radius:14px;"></div>
<svg class="b" style="left:226.50px;top:989.50px;" width="27.00" height="27.00" viewBox="0 0 27 27" fill="none"><circle cx="12.800" cy="12.800" r="11" stroke="#181d27" stroke-width="2.100"/><path d="M21 21 L24.500 24.500" stroke="#181d27" stroke-width="2.100" stroke-linecap="round"/></svg>
<span class="t" id="t49" style="left:266.00px;top:992.51px;font-size:23.50px;color:#a4a7ae;letter-spacing:0.679px;">Find in table</span>
<svg class="b" style="left:1891.30px;top:985.10px;" width="37.07" height="37.07" viewBox="0 0 33.1 33.1" fill="none"><g stroke="#1c5dd6" stroke-width="1.55" stroke-linecap="round" stroke-linejoin="round"><path d="M7.400 19.960 L16.700 7.260 A2.600 2.600 0 0 1 20.900 10.340 L11.600 23.040 A2.600 2.600 0 0 1 7.400 19.960 Z"/><path d="M15.160 9.360 L19.360 12.440"/><path d="M16.800 22.700 H24.100"/></g></svg>
<span class="t" id="t50" style="left:1935.50px;top:991.62px;font-size:23.50px;color:#1c5dd6;letter-spacing:0.445px;">Edit</span>
<svg class="b" style="left:2024.50px;top:990.00px;" width="24.00" height="24.00" viewBox="0 0 24 24" fill="none"><rect x="1.500" y="2" width="8.500" height="19.500" rx="1.500" stroke="#1c5dd6" stroke-width="1.600"/><rect x="13.500" y="2" width="8.500" height="19.500" rx="1.500" stroke="#1c5dd6" stroke-width="1.600"/></svg>
<span class="t" id="t51" style="left:2062.50px;top:991.62px;font-size:23.50px;color:#1c5dd6;letter-spacing:1.021px;">Columns</span>
<div class="b" style="left:180.20px;top:1063.75px;width:2037.30px;height:78.60px;background:#fafafa;border-bottom:1.2px solid #eceef2;"></div>
<span class="t" id="t52" style="left:192.40px;top:1092.26px;font-size:23.50px;color:#535862;letter-spacing:1.295px;-webkit-text-stroke:0.4px #535862;">Name</span>
<svg class="b" style="left:516.00px;top:1092.00px;" width="13.50" height="22.00" viewBox="0 0 13.500 22" fill="none"><path d="M6.750 1 L12 8 H1.500 Z" fill="#a4a7ae"/><path d="M6.750 21 L12 14 H1.500 Z" fill="#a4a7ae"/></svg>
<span class="t" id="t53" style="left:560.70px;top:1092.26px;font-size:23.50px;color:#535862;letter-spacing:1.307px;-webkit-text-stroke:0.4px #535862;">Type</span>
<span class="t" id="t54" style="left:834.80px;top:1092.26px;font-size:23.50px;color:#535862;letter-spacing:1.432px;-webkit-text-stroke:0.4px #535862;">Description</span>
<svg class="b" style="left:1399.50px;top:1092.00px;" width="20.00" height="20.00" viewBox="0 0 20 20" fill="none"><path d="M2 2.500 H18 L12 10 V17.500 L8 15 V10 Z" stroke="#414651" stroke-width="1.600" stroke-linejoin="round"/></svg>
<span class="t" id="t55" style="left:1443.00px;top:1092.26px;font-size:23.50px;color:#535862;letter-spacing:1.504px;-webkit-text-stroke:0.4px #535862;">Tags</span>
<svg class="b" style="left:1822.20px;top:1092.00px;" width="20.00" height="20.00" viewBox="0 0 20 20" fill="none"><path d="M2 2.500 H18 L12 10 V17.500 L8 15 V10 Z" stroke="#414651" stroke-width="1.600" stroke-linejoin="round"/></svg>
<span class="t" id="t56" style="left:1863.90px;top:1092.26px;font-size:23.50px;color:#535862;letter-spacing:1.180px;-webkit-text-stroke:0.4px #535862;">Glossary Terms</span>
<svg class="b" style="left:192.00px;top:1165.00px;" width="30.00" height="30.00" viewBox="0 0 30 30" fill="none"><g stroke="#414651" stroke-width="1.700" stroke-linecap="round" stroke-linejoin="round"><circle cx="19.500" cy="10.500" r="8.500"/><circle cx="22" cy="8" r="1.800" stroke-width="1.400"/><path d="M12.500 15 L2 25.500 V28.500 H6 L7.500 27 V25 H9.500 L11 23.500 V21.500 H13 L15.500 18.500"/><path d="M2.500 26.500 L13 16" stroke-width="1.200"/></g></svg>
<span class="t" id="t57" style="left:232.80px;top:1170.90px;font-size:23.50px;color:#252b37;letter-spacing:1.037px;">customer_id</span>
<span class="t" id="t58" style="left:559.70px;top:1170.90px;font-size:23.50px;color:#252b37;letter-spacing:1.161px;">numeric</span>
<span class="t" id="t59" style="left:835.80px;top:1168.90px;font-size:23.50px;color:#252b37;letter-spacing:0.779px;">The ID of the customer. This is the primary</span>
<span class="t" id="t60" style="left:834.80px;top:1202.51px;font-size:23.50px;color:#252b37;letter-spacing:0.884px;">key column for this table.</span>
<div class="b" style="left:1386.10px;top:1169.75px;width:102.60px;height:42.20px;background:#ffffff;border:1.2px solid #e8ebf4;border-radius:7.5px;"></div>
<svg class="b" style="left:1405.20px;top:1182.00px;" width="18.00" height="18.00" viewBox="0 0 18 18" fill="none"><path d="M9 1.100 V16.900 M1.100 9 H16.900" stroke="#1a60da" stroke-width="2.050" stroke-linecap="butt"/></svg>
<span class="t" id="t61" style="left:1435.90px;top:1181.52px;font-size:20.30px;color:#1c5dd6;letter-spacing:1.447px;-webkit-text-stroke:0.5px #1c5dd6;">Add</span>
<div class="b" style="left:1808.20px;top:1169.75px;width:102.60px;height:42.20px;background:#ffffff;border:1.2px solid #e8ebf4;border-radius:7.5px;"></div>
<svg class="b" style="left:1827.30px;top:1182.00px;" width="18.00" height="18.00" viewBox="0 0 18 18" fill="none"><path d="M9 1.100 V16.900 M1.100 9 H16.900" stroke="#1a60da" stroke-width="2.050" stroke-linecap="butt"/></svg>
<span class="t" id="t62" style="left:1858.00px;top:1181.52px;font-size:20.30px;color:#1c5dd6;letter-spacing:1.447px;-webkit-text-stroke:0.5px #1c5dd6;">Add</span>
<div class="b" style="left:180.20px;top:1304.90px;width:2037.30px;height:1.20px;background:#eef0f3;"></div>
<span class="t" id="t63" style="left:193.40px;top:1334.81px;font-size:23.50px;color:#252b37;letter-spacing:0.742px;">shop_id</span>
<span class="t" id="t64" style="left:559.70px;top:1334.81px;font-size:23.50px;color:#252b37;letter-spacing:1.161px;">numeric</span>
<span class="t" id="t65" style="left:835.80px;top:1332.71px;font-size:23.50px;color:#252b37;letter-spacing:0.705px;">The ID of the store. This column is a foreign</span>
<span class="t" id="t66" style="left:834.80px;top:1366.51px;font-size:23.50px;color:#252b37;letter-spacing:0.764px;">key reference to the shop_id column in the ...</span>
<span class="t" id="t67" style="left:836.50px;top:1402.31px;font-size:23.50px;color:#1c5dd6;letter-spacing:0.811px;">View more</span>
<div class="b" style="left:1386.10px;top:1332.60px;width:102.60px;height:42.20px;background:#ffffff;border:1.2px solid #e8ebf4;border-radius:7.5px;"></div>
<svg class="b" style="left:1405.20px;top:1344.85px;" width="18.00" height="18.00" viewBox="0 0 18 18" fill="none"><path d="M9 1.100 V16.900 M1.100 9 H16.900" stroke="#1a60da" stroke-width="2.050" stroke-linecap="butt"/></svg>
<span class="t" id="t68" style="left:1435.90px;top:1344.36px;font-size:20.30px;color:#1c5dd6;letter-spacing:1.447px;-webkit-text-stroke:0.5px #1c5dd6;">Add</span>
<div class="b" style="left:1808.20px;top:1332.60px;width:102.60px;height:42.20px;background:#ffffff;border:1.2px solid #e8ebf4;border-radius:7.5px;"></div>
<svg class="b" style="left:1827.30px;top:1344.85px;" width="18.00" height="18.00" viewBox="0 0 18 18" fill="none"><path d="M9 1.100 V16.900 M1.100 9 H16.900" stroke="#1a60da" stroke-width="2.050" stroke-linecap="butt"/></svg>
<span class="t" id="t69" style="left:1858.00px;top:1344.36px;font-size:20.30px;color:#1c5dd6;letter-spacing:1.447px;-webkit-text-stroke:0.5px #1c5dd6;">Add</span>
</section>
</main>
<aside aria-label="Details panel">
<div class="b" style="left:2274.60px;top:611.40px;width:800.00px;height:207.60px;background:#ffffff;border:1px solid #eff0f4;border-radius:22px;"></div>
<div class="b" style="left:2275.60px;top:612.40px;width:800.00px;height:88.00px;background:#fafafb;border-radius:22px;"></div>
<span class="t" id="t70" style="left:2315.90px;top:645.01px;font-size:23.70px;color:#181d27;letter-spacing:0.846px;-webkit-text-stroke:0.42px #181d27;">Data Products</span>
<span class="t" id="t71" style="left:2311.50px;top:734.51px;font-size:30.00px;color:#414651;letter-spacing:-1.263px;">- -</span>
<div class="b" style="left:2274.60px;top:847.10px;width:800.00px;height:363.40px;background:#ffffff;border:1px solid #eff0f4;border-radius:22px;"></div>
<div class="b" style="left:2275.60px;top:848.10px;width:800.00px;height:89.50px;background:#fafafb;border-radius:22px;"></div>
<span class="t" id="t72" style="left:2316.90px;top:881.41px;font-size:23.70px;color:#181d27;letter-spacing:1.237px;-webkit-text-stroke:0.42px #181d27;">Tags</span>
<div class="b" style="left:2385.20px;top:876.80px;width:32.00px;height:32.00px;background:#ffffff;border:1px solid #eceef2;border-radius:7px;"></div>
<svg class="b" style="left:2389.70px;top:881.30px;" width="23.00" height="23.00" viewBox="0 0 18 18" fill="none"><path d="M3 4.800 a2.800 2.800 0 0 1 2.800 -2.800 h6.400 a2.800 2.800 0 0 1 2.800 2.800 v4.400 a2.800 2.800 0 0 1 -2.800 2.800 H8.500 L5.500 14.600 V12 a2.800 2.800 0 0 1 -2.500 -2.800 Z" stroke="#6a707d" stroke-width="1.200" stroke-linejoin="round"/><path d="M7.900 5.600 a1.200 1.200 0 1 1 1.700 1.100 c-0.400 0.200 -0.600 0.500 -0.600 0.900 M9 9.300 v0.100" stroke="#6a707d" stroke-width="1" stroke-linecap="round"/></svg>
<div class="b" style="left:2432.40px;top:876.80px;width:32.00px;height:32.00px;background:#ffffff;border:1px solid #eceef2;border-radius:7px;"></div>
<svg class="b" style="left:2436.90px;top:881.30px;" width="23.00" height="23.00" viewBox="0 0 18 18" fill="none"><path d="M6 4.500 V4.300 a2.300 2.300 0 0 1 2.300 -2.300 h5.400 a2.300 2.300 0 0 1 2.300 2.300 v4.400 a2.300 2.300 0 0 1 -2.300 2.300 h-0.200" stroke="#6a707d" stroke-width="1.200" stroke-linecap="round"/><path d="M2 7.300 a2.300 2.300 0 0 1 2.300 -2.300 h6.400 a2.300 2.300 0 0 1 2.300 2.300 v4 a2.300 2.300 0 0 1 -2.300 2.300 H8.500 L6 16 V13.600 H4.300 a2.300 2.300 0 0 1 -2.300 -2.300 Z" stroke="#6a707d" stroke-width="1.200" stroke-linejoin="round"/><path d="M5.300 9.300 v0.100 M7.500 9.300 v0.100 M9.700 9.300 v0.100" stroke="#6a707d" stroke-width="1.300" stroke-linecap="round"/></svg>
<div class="b" style="left:2308.75px;top:976.90px;width:102.60px;height:42.20px;background:#ffffff;border:1.2px solid #e8ebf4;border-radius:7.5px;"></div>
<svg class="b" style="left:2327.85px;top:989.15px;" width="18.00" height="18.00" viewBox="0 0 18 18" fill="none"><path d="M9 1.100 V16.900 M1.100 9 H16.900" stroke="#1a60da" stroke-width="2.050" stroke-linecap="butt"/></svg>
<span class="t" id="t73" style="left:2358.55px;top:987.61px;font-size:20.30px;color:#1c5dd6;letter-spacing:1.447px;-webkit-text-stroke:0.5px #1c5dd6;">Add</span>
<div class="b" style="left:2274.60px;top:1241.60px;width:800.00px;height:400.00px;background:#ffffff;border:1px solid #eff0f4;border-radius:22px;"></div>
<div class="b" style="left:2275.60px;top:1242.60px;width:800.00px;height:89.00px;background:#fafafb;border-radius:22px;"></div>
<span class="t" id="t74" style="left:2315.60px;top:1275.62px;font-size:23.70px;color:#181d27;letter-spacing:0.988px;-webkit-text-stroke:0.42px #181d27;">Glossary Term</span>
<div class="b" style="left:2495.60px;top:1270.30px;width:32.40px;height:32.40px;background:#ffffff;border:1px solid #eceef2;border-radius:7px;"></div>
<svg class="b" style="left:2500.30px;top:1275.00px;" width="23.00" height="23.00" viewBox="0 0 18 18" fill="none"><path d="M6 4.500 V4.300 a2.300 2.300 0 0 1 2.300 -2.300 h5.400 a2.300 2.300 0 0 1 2.300 2.300 v4.400 a2.300 2.300 0 0 1 -2.300 2.300 h-0.200" stroke="#6a707d" stroke-width="1.200" stroke-linecap="round"/><path d="M2 7.300 a2.300 2.300 0 0 1 2.300 -2.300 h6.400 a2.300 2.300 0 0 1 2.300 2.300 v4 a2.300 2.300 0 0 1 -2.300 2.300 H8.500 L6 16 V13.600 H4.300 a2.300 2.300 0 0 1 -2.300 -2.300 Z" stroke="#6a707d" stroke-width="1.200" stroke-linejoin="round"/><path d="M5.300 9.300 v0.100 M7.500 9.300 v0.100 M9.700 9.300 v0.100" stroke="#6a707d" stroke-width="1.300" stroke-linecap="round"/></svg>
<div class="b" style="left:2308.75px;top:1370.40px;width:102.60px;height:42.20px;background:#ffffff;border:1.2px solid #e8ebf4;border-radius:7.5px;"></div>
<svg class="b" style="left:2327.85px;top:1382.65px;" width="18.00" height="18.00" viewBox="0 0 18 18" fill="none"><path d="M9 1.100 V16.900 M1.100 9 H16.900" stroke="#1a60da" stroke-width="2.050" stroke-linecap="butt"/></svg>
<span class="t" id="t75" style="left:2358.55px;top:1381.11px;font-size:20.30px;color:#1c5dd6;letter-spacing:1.447px;-webkit-text-stroke:0.5px #1c5dd6;">Add</span>
</aside>
<div class="b" style="left:0;top:1366px;width:2943px;height:58px;background:linear-gradient(to bottom, rgba(20,20,30,0) 0%, rgba(20,20,30,0.03) 45%, rgba(20,20,30,0.118) 100%);-webkit-mask-image:linear-gradient(to right, rgba(0,0,0,0.3) 0px, rgba(0,0,0,0.45) 140px, #000 420px);mask-image:linear-gradient(to right, rgba(0,0,0,0.3) 0px, rgba(0,0,0,0.45) 140px, #000 420px);"></div>
<svg class="b" style="left:2872.00px;top:1293.00px;" width="93.00" height="93.00" viewBox="0 0 93 93" fill="none">
<circle cx="46.500" cy="46.600" r="43" fill="#dfe8f8" opacity="0.600"/>
<circle cx="46.500" cy="46.600" r="41.600" fill="#ffffff"/>
<circle cx="46.500" cy="46.600" r="36.700" fill="#0a4fc4"/>
<path d="M46.500 27 V34" stroke="#fff" stroke-width="2"/><circle cx="46.300" cy="25.800" r="2.700" fill="#fff"/>
<rect x="23.300" y="32.800" width="45.500" height="32.400" rx="12" fill="#ffffff"/>
<path d="M53 64.500 H62.500 L61.500 71.500 Z" fill="#fff"/>
<rect x="30" y="41.700" width="32.500" height="16.200" rx="6.500" fill="#b9d7fb"/>
<circle cx="39.200" cy="49.400" r="2.200" fill="#0a4fc4"/><circle cx="54" cy="49.400" r="2.200" fill="#0a4fc4"/>
</svg>
<div class="b" style="left:143.00px;top:178.00px;width:2723.00px;height:290.20px;border:4px solid #0e9af7;"></div>
<div class="b" style="left:143.00px;top:502.75px;width:1977.80px;height:102.25px;border:4px solid #0e9af7;"></div>
</div>
</body></html>
